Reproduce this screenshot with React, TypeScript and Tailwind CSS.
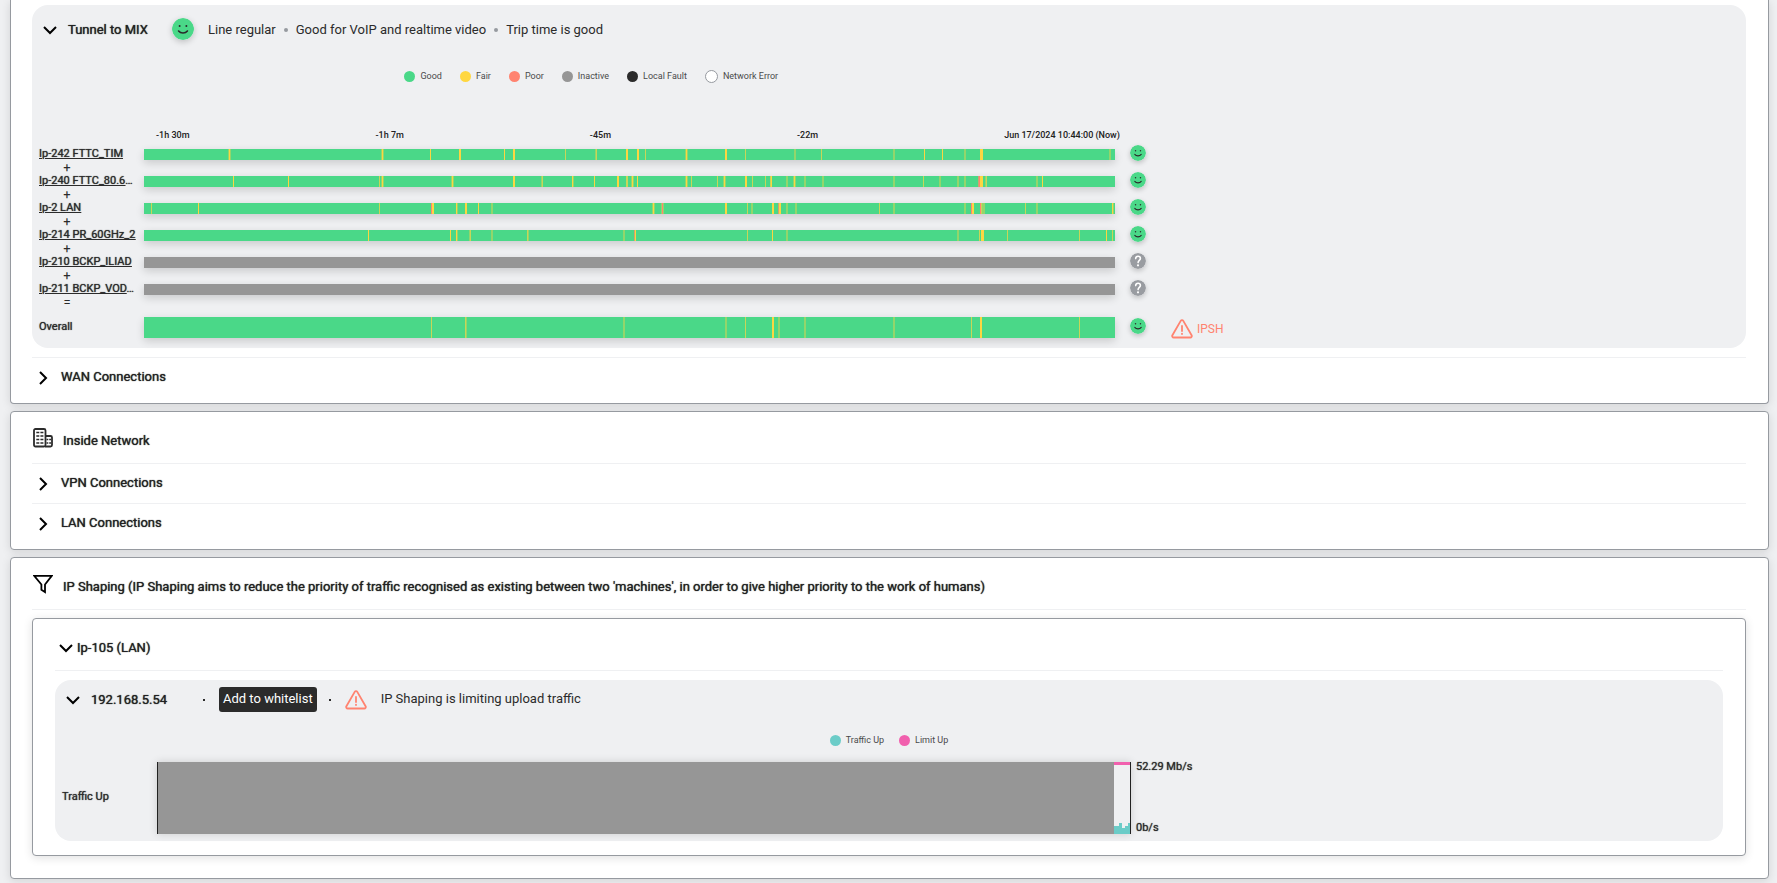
import { useState, type ReactNode } from "react";

type Tone = "yellow" | "soft" | "faint" | "coral" | "pink";
type Mark = [x: number, width: number, tone: Tone];

const TONES: Record<Tone, string> = {
  yellow: "#fcd641",
  soft: "#c8d658",
  faint: "#93d66b",
  coral: "#ff8370",
  pink: "#d0a270",
};

const Y: Tone = "yellow";
const S: Tone = "soft";
const F: Tone = "faint";
const C: Tone = "coral";
const P: Tone = "pink";

const CHART_WIDTH = 971;

type Line = { name: string; shortened?: boolean; joiner: string; active: boolean; marks: Mark[] };

const LINES: Line[] = [
  {
    name: "Ip-242 FTTC_TIM",
    joiner: "+",
    active: true,
    marks: [
      [84, 3, F], [85, 1, Y], [237, 3, F], [238, 1, Y], [286, 1, Y], [315, 2, Y], [360, 1, Y], [369, 2, Y],
      [421, 1, S], [451, 2, F], [452, 1, S], [482, 2, Y], [493, 2, Y], [501, 1, S], [541, 3, F], [542, 1, Y],
      [581, 2, Y], [601, 1, S], [650, 2, F], [677, 1, S], [749, 2, F], [780, 1, Y], [798, 1, Y], [820, 2, F],
      [836, 3, Y], [965, 2, F],
    ],
  },
  {
    name: "Ip-240 FTTC_80.6",
    shortened: true,
    joiner: "+",
    active: true,
    marks: [
      [89, 1, Y], [144, 1, Y], [235, 1, S], [237, 3, F], [238, 1, Y], [307, 3, F], [308, 1, Y], [369, 2, Y],
      [397, 2, F], [398, 1, S], [428, 2, F], [428, 1, Y], [450, 1, Y], [473, 2, Y], [482, 2, S], [487, 3, F],
      [488, 1, Y], [493, 1, Y], [541, 3, F], [542, 1, Y], [547, 1, S], [573, 1, S], [579, 3, F], [580, 1, Y],
      [601, 2, Y], [608, 1, S], [621, 1, S], [626, 2, S], [627, 1, Y], [642, 2, F], [649, 3, F], [650, 1, Y],
      [660, 2, F], [678, 2, F], [749, 2, F], [779, 1, S], [795, 2, F], [813, 2, F], [820, 2, F], [834, 1, P],
      [835, 1, C], [836, 3, Y], [841, 2, F], [842, 1, S], [892, 2, F], [898, 1, Y],
    ],
  },
  {
    name: "Ip-2 LAN",
    joiner: "+",
    active: true,
    marks: [
      [7, 1, S], [54, 1, Y], [235, 1, S], [287, 1, C], [288, 2, Y], [312, 2, F], [312, 1, Y], [321, 2, Y],
      [334, 1, Y], [347, 2, F], [508, 3, F], [509, 1, Y], [517, 3, F], [518, 1, C], [581, 2, Y], [603, 1, S],
      [607, 2, F], [628, 2, Y], [634, 1, P], [635, 2, Y], [642, 2, F], [651, 2, F], [735, 1, S], [749, 2, F],
      [820, 2, F], [827, 1, C], [828, 2, Y], [836, 1, C], [837, 1, S], [838, 3, F], [881, 1, S], [892, 2, F],
      [968, 1, Y], [969, 1, F],
    ],
  },
  {
    name: "Ip-214 PR_60GHz_2",
    joiner: "+",
    active: true,
    marks: [
      [224, 1, Y], [306, 1, Y], [312, 2, F], [312, 1, Y], [325, 2, F], [326, 1, S], [347, 2, F], [383, 2, F],
      [383, 1, S], [479, 2, F], [490, 2, P], [491, 1, Y], [603, 1, S], [628, 1, Y], [642, 2, F], [813, 2, F],
      [835, 1, S], [837, 3, Y], [863, 1, S], [935, 1, S], [962, 1, Y], [968, 1, S],
    ],
  },
  { name: "Ip-210 BCKP_ILIAD", joiner: "+", active: false, marks: [] },
  { name: "Ip-211 BCKP_VOD", shortened: true, joiner: "=", active: false, marks: [] },
];

const OVERALL: Mark[] = [
  [287, 1, S], [321, 2, F], [321, 1, S], [479, 2, F], [581, 2, F], [601, 1, S], [628, 2, Y], [634, 2, F],
  [660, 2, F], [749, 2, F], [827, 1, S], [836, 2, Y], [935, 1, S],
];

const TICKS = ["-1h 30m", "-1h 7m", "-45m", "-22m", "Jun 17/2024 10:44:00 (Now)"];

const SANS = "font-['Roboto','Liberation_Sans',sans-serif]";
const HEADING = "text-[13px] leading-4 text-[#212121] [text-shadow:0_0_1px_#212121]";
const LABEL = "text-[11px] leading-4 text-[#2b2b2b] [text-shadow:0_0_1px_#2b2b2b]";

function Chevron({ open }: { open: boolean }) {
  return open ? (
    <svg viewBox="0 0 14 14" className="size-[14px] shrink-0" fill="none" stroke="#000" strokeWidth="2" aria-hidden="true">
      <path d="M1 4l6 6 6-6" />
    </svg>
  ) : (
    <svg viewBox="0 0 14 14" className="size-[14px] shrink-0" fill="none" stroke="#000" strokeWidth="2" aria-hidden="true">
      <path d="M4 1l6 6-6 6" />
    </svg>
  );
}

function Smiley({ className }: { className: string }) {
  return (
    <svg viewBox="0 0 22 22" className={className} role="img" aria-label="Good">
      <circle cx="11" cy="11" r="11" fill="#4ad888" />
      <circle cx="7.6" cy="8" r="1" fill="#2b2b2b" />
      <circle cx="14.4" cy="8" r="1" fill="#2b2b2b" />
      <path d="M6.6 13c1 1.300 2.500 2 4.400 2s3.400-.7 4.400-2" fill="none" stroke="#2b2b2b" strokeWidth="1.600" strokeLinecap="round" />
    </svg>
  );
}

function Unknown({ className }: { className: string }) {
  return (
    <svg viewBox="0 0 16 16" className={className} role="img" aria-label="Unknown">
      <circle cx="8" cy="8" r="8" fill="#999ca1" />
      <path d="M5.700 5.600c0-1.400 1-2.300 2.300-2.300s2.400.8 2.400 2.100c0 1.900-2.300 2-2.300 4.200" fill="none" stroke="#fff" strokeWidth="1.600" strokeLinecap="round" />
      <circle cx="8" cy="12.300" r="1.100" fill="#fff" />
    </svg>
  );
}

function Warning() {
  return (
    <svg viewBox="0 0 22 20" className="h-5 w-[22px] shrink-0" fill="none" stroke="#ff8370" strokeWidth="1.800" strokeLinejoin="round" strokeLinecap="round" aria-hidden="true">
      <path d="M9.700 1.900 1.400 16.300c-.6 1 .1 2.200 1.300 2.200h16.600c1.200 0 1.900-1.200 1.300-2.200L12.300 1.900c-.6-1-2-1-2.600 0z" />
      <path d="M11 7v5" />
      <path d="M11 14.600v.4" strokeWidth="1.800" />
    </svg>
  );
}

function Building() {
  return (
    <svg viewBox="0 0 20 20" className="size-5 shrink-0" fill="none" stroke="#2b2b2b" strokeWidth="1.800" strokeLinejoin="round" aria-hidden="true">
      <rect x="1" y="1" width="11.500" height="17.500" rx="1.500" />
      <path d="M12.500 8H17.500a1.500 1.500 0 0 1 1.500 1.500V17a1.500 1.500 0 0 1-1.500 1.500H12" />
      <path d="M3.300 4.500h3M7.400 4.500h3M3.300 8h3M7.400 8h3M3.300 11.500h3M7.400 11.500h3M3.300 15h3M7.400 15h3M13.500 11.500h1.800M16.200 11.500h1.800M13.500 15h1.800M16.200 15h1.800" strokeWidth="1.500" />
    </svg>
  );
}

function Funnel() {
  return (
    <svg viewBox="0 0 20 20" className="size-5 shrink-0" fill="none" stroke="#000" strokeWidth="1.800" aria-hidden="true">
      <path d="M1.200 1.800h17.600L12 10.500v7.600l-3.600-2.300V10.500z" />
    </svg>
  );
}

function Bar({ label, active, marks, className }: { label: string; active: boolean; marks: Mark[]; className: string }) {
  return (
    <svg
      viewBox={`0 0 ${CHART_WIDTH} 10`}
      preserveAspectRatio="none"
      shapeRendering="crispEdges"
      className={`block w-full shadow-[0_3px_8px_rgba(0,0,0,0.16)] ${className}`}
      role="img"
      aria-label={label}
    >
      <rect width={CHART_WIDTH} height="10" fill={active ? "#4ad888" : "#969696"} />
      {marks.map(([x, width, tone], i) => (
        <rect key={i} x={x} width={width} height="10" fill={TONES[tone]} />
      ))}
    </svg>
  );
}

function LegendItem({ swatch, children }: { swatch: string; children: ReactNode }) {
  return (
    <li className="flex items-center gap-[5px]">
      <span className={`rounded-full ${swatch}`} />
      {children}
    </li>
  );
}

function Card({ className, children }: { className: string; children: ReactNode }) {
  return (
    <section className={`rounded border border-[#969aa0] bg-white shadow-[0_2px_10px_rgba(0,0,0,0.12)] ${className}`}>
      {children}
    </section>
  );
}

function Collapsed({ children }: { children: ReactNode }) {
  const [open, setOpen] = useState(false);
  return (
    <button
      type="button"
      aria-expanded={open}
      onClick={() => setOpen(!open)}
      className={`flex h-10 w-full items-center gap-[11px] border-t border-[#eff0f2] pl-1 text-left ${HEADING}`}
    >
      <Chevron open={open} />
      <span className="pb-[2px]">{children}</span>
    </button>
  );
}

const TABLE = "grid grid-cols-[105px_minmax(0,971fr)_47px_minmax(0,584fr)]";

function TunnelPanel() {
  return (
    <div className="rounded-2xl bg-[#eff0f2] pb-[10px] pl-[7px]">
      <div className="flex h-12 items-center">
        <button type="button" aria-expanded="true" className={`flex w-[133px] items-center gap-[11px] pt-[2px] pl-1 ${HEADING}`}>
          <Chevron open />
          Tunnel to MIX
        </button>
        <Smiley className="size-[22px] rounded-full shadow-[0_2px_6px_rgba(0,0,0,0.2)]" />
        <p className="flex items-center pt-[2px] pl-[14px] text-[13px] leading-4 text-[#2b2b2b]">
          Line regular
          <span className="mx-2 size-1 rounded-full bg-[#969aa0]" />
          Good for VoIP and realtime video
          <span className="mx-2 size-1 rounded-full bg-[#969aa0]" />
          Trip time is good
        </p>
      </div>

      <ul className="mt-[11px] flex h-6 w-[65%] items-center justify-center gap-[18px] pr-[5px] text-[9px] leading-3 text-[#4a4a4a]">
        <LegendItem swatch="size-[11px] bg-[#4ad888]">Good</LegendItem>
        <LegendItem swatch="size-[11px] bg-[#ffd740]">Fair</LegendItem>
        <LegendItem swatch="size-[11px] bg-[#ff8370]">Poor</LegendItem>
        <LegendItem swatch="size-[11px] bg-[#969696]">Inactive</LegendItem>
        <LegendItem swatch="size-[11px] bg-[#2b2b2b]">Local Fault</LegendItem>
        <LegendItem swatch="size-[13px] border border-[#969aa0] bg-white">Network Error</LegendItem>
      </ul>

      <div className={`mt-10 mb-[3px] ${TABLE}`}>
        <div className="col-start-2 -mr-[5px] flex justify-between pl-3 text-[9px] leading-[14px] font-medium text-[#212121]">
          {TICKS.map((tick) => (
            <span key={tick}>{tick}</span>
          ))}
        </div>
      </div>

      {LINES.map((line) => (
        <div key={line.name} className={`h-[27px] ${TABLE}`}>
          <div className={`pt-[1px] ${LABEL}`}>
            <span className="block whitespace-nowrap">
              <a href="#line" className="underline">
                {line.name}
              </a>
              {line.shortened && "…"}
            </span>
            <span className="block w-14 text-center text-[13px] leading-[11px] [text-shadow:none]">{line.joiner}</span>
          </div>
          <Bar label={line.name} active={line.active} marks={line.marks} className="mt-1 h-[11px]" />
          {line.active ? (
            <Smiley className="ml-[15px] size-4 rounded-full shadow-[0_2px_5px_rgba(0,0,0,0.2)]" />
          ) : (
            <Unknown className="ml-[15px] size-4 rounded-full shadow-[0_2px_5px_rgba(0,0,0,0.2)]" />
          )}
        </div>
      ))}

      <div className={`mt-[10px] h-[21px] ${TABLE}`}>
        <span className={`pt-[2px] ${LABEL}`}>Overall</span>
        <Bar label="Overall" active marks={OVERALL} className="h-[21px]" />
        <Smiley className="mt-[1px] ml-[15px] size-4 rounded-full shadow-[0_2px_5px_rgba(0,0,0,0.2)]" />
        <span className="flex items-center gap-1 pl-[9px] pt-[2px] text-[12px] leading-4 text-[#ff8370]">
          <Warning />
          IPSH
        </span>
      </div>
    </div>
  );
}

function ShapingPanel() {
  return (
    <div className="rounded-2xl bg-[#eff0f2] pb-[7px] pl-[7px]">
      <div className="flex h-[39px] items-center text-[13px] leading-4 text-[#2b2b2b]">
        <button type="button" aria-expanded="true" className={`flex w-[141px] items-center gap-[11px] pl-1 ${HEADING}`}>
          <Chevron open />
          192.168.5.54
        </button>
        <span className="size-[2px] bg-[#2b2b2b]" />
        <button type="button" className="mr-3 ml-[14px] h-[25px] rounded-[3px] bg-[#2b2b2b] px-1 pb-[2px] text-white">
          Add to whitelist
        </button>
        <span className="size-[2px] bg-[#2b2b2b]" />
        <span className="flex items-center gap-[14px] pl-[14px]">
          <Warning />
          <span className="pb-[1px]">IP Shaping is limiting upload traffic</span>
        </span>
      </div>

      <ul className="mt-[9px] mb-[10px] flex h-6 items-center justify-center gap-[15px] pr-[7px] text-[9px] leading-3 text-[#4a4a4a]">
        <LegendItem swatch="size-[11px] bg-[#6bccc8]">Traffic Up</LegendItem>
        <LegendItem swatch="size-[11px] bg-[#f160ae]">Limit Up</LegendItem>
      </ul>

      <div className="grid h-[72px] grid-cols-[95px_minmax(0,974fr)_minmax(0,592fr)]">
        <span className={`self-center pb-[2px] ${LABEL}`}>Traffic Up</span>
        <svg
          viewBox="0 0 974 72"
          preserveAspectRatio="none"
          shapeRendering="crispEdges"
          className="block h-[72px] w-full shadow-[0_0_8px_rgba(0,0,0,0.15)]"
          role="img"
          aria-label="Traffic Up"
        >
          <rect width="974" height="72" fill="#eff0f2" />
          <rect width="957" height="72" fill="#969696" />
          <rect x="957" width="16" height="3" fill="#f160ae" />
          <path d="M957 72v-8h5v-3h3v5h3v-2h3v-3h2v11z" fill="#6bccc8" />
          <rect width="1" height="72" fill="#212121" />
          <rect x="973" width="1" height="72" fill="#212121" />
        </svg>
        <div className="flex flex-col justify-between pb-[2px] pl-[5px] text-[11px] leading-[9px] text-[#2b2b2b] [text-shadow:0_0_1px_#2b2b2b]">
          <span>52.29 Mb/s</span>
          <span>0b/s</span>
        </div>
      </div>
    </div>
  );
}

export default function App() {
  return (
    <main className={`min-h-screen bg-[#eff0f2] pr-2 pb-1 pl-[10px] ${SANS}`}>
      <Card className="rounded-t-none border-t-0 pt-[5px] pr-[22px] pb-[6px] pl-[21px]">
        <TunnelPanel />
        <div className="mt-[9px]">
          <Collapsed>WAN Connections</Collapsed>
        </div>
      </Card>

      <Card className="mt-[7px] pr-[22px] pb-[6px] pl-[21px]">
        <h2 className={`flex h-[51px] items-center gap-[10px] pl-[1px] ${HEADING}`}>
          <Building />
          <span className="pt-[6px]">Inside Network</span>
        </h2>
        <Collapsed>VPN Connections</Collapsed>
        <Collapsed>LAN Connections</Collapsed>
      </Card>

      <Card className="mt-[7px] pr-[22px] pb-[22px] pl-[21px]">
        <h2 className={`flex h-[51px] items-center gap-[10px] pl-[1px] ${HEADING}`}>
          <Funnel />
          <span className="pt-[6px]">
            IP Shaping (IP Shaping aims to reduce the priority of traffic recognised as existing between two 'machines', in
            order to give higher priority to the work of humans)
          </span>
        </h2>
        <div className="border-t border-[#eff0f2] pt-2">
          <Card className="px-[22px] pb-[14px]">
            <button type="button" aria-expanded="true" className={`flex h-[51px] w-full items-center gap-1 pt-[6px] pl-1 ${HEADING}`}>
              <Chevron open />
              Ip-105 (LAN)
            </button>
            <div className="border-t border-[#eff0f2] pt-[9px]">
              <ShapingPanel />
            </div>
          </Card>
        </div>
      </Card>
    </main>
  );
}
